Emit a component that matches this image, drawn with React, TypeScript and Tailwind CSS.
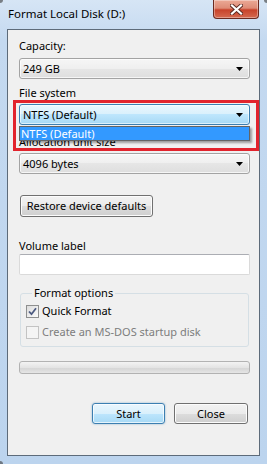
import React from "react";

const FONT = { fontFamily: '"Noto Sans", "Open Sans", sans-serif' };

function Arrow() {
  return (
    <svg width="7" height="4" viewBox="0 0 7 4" className="block">
      <path d="M0 0 H7 L3.5 4 Z" fill="#000" />
    </svg>
  );
}

function Combo({ value, hot }: { value: string; hot?: boolean }) {
  return (
    <div
      className={
        hot
          ? "flex h-[21px] items-center justify-between rounded-[3px] border border-[#3c7fb1] bg-[linear-gradient(#eaf6fd_0%,#d9f0fc_50%,#bee6fd_50%,#a7d9f5_100%)] pl-[3px] pr-[6px] shadow-[inset_0_0_0_1px_rgba(255,255,255,0.6)]"
          : "flex h-[21px] items-center justify-between rounded-[3px] border border-[#a3a3a3] bg-[linear-gradient(#f6f6f6_0%,#efefef_50%,#e6e6e6_50%,#dedede_100%)] pl-[3px] pr-[6px] shadow-[inset_0_0_0_1px_rgba(255,255,255,0.7)]"
      }
    >
      <span className="leading-[16px]">{value}</span>
      <Arrow />
    </div>
  );
}

function Label({ children, className = "" }: { children: React.ReactNode; className?: string }) {
  return <div className={"h-[16px] leading-[16px] " + className}>{children}</div>;
}

function CheckRow({ checked, disabled, label }: { checked?: boolean; disabled?: boolean; label: string }) {
  return (
    <div className="flex h-[16px] items-center gap-[3px]">
      <div
        className={
          disabled
            ? "flex h-[13px] w-[13px] items-center justify-center border border-[#c3c3c3] bg-[#f4f4f4]"
            : "flex h-[13px] w-[13px] items-center justify-center border border-[#8e8f8f] bg-[linear-gradient(135deg,#dcdcdc,#fbfbfb)]"
        }
      >
        {checked && (
          <svg width="9" height="9" viewBox="0 0 9 9" className="block">
            <path d="M1 4.5 L3.5 7.2 L8 1.2" fill="none" stroke="#4c5a80" strokeWidth="1.8" />
          </svg>
        )}
      </div>
      <span className={disabled ? "leading-[16px] text-[#7d7d7d]" : "leading-[16px]"}>{label}</span>
    </div>
  );
}

export default function App() {
  return (
    <div
      style={FONT}
      className="relative h-[464px] w-[267px] overflow-hidden bg-[linear-gradient(180deg,#d6e5f5_0px,#c4d9f0_40px,#bcd4ee_100%)] text-[11px] text-black"
    >
      {/* title bar */}
      <div className="flex h-[29px] items-start">
        <div className="pl-[8px] pt-[6px] text-[11.5px] leading-[16px] text-black">Format Local Disk (D:)</div>
        <div className="ml-auto mr-[8px] flex h-[19px] w-[46px] items-center justify-center rounded-b-[4px] border border-t-0 border-[#6b2a20] bg-[linear-gradient(#eba996_0%,#de8c77_45%,#c8432b_55%,#d56a50_100%)] shadow-[inset_0_0_0_1px_rgba(255,255,255,0.35)]">
          <svg width="13" height="11" viewBox="0 0 13 11" className="block">
            <path d="M2 1.5 L11 9.5 M11 1.5 L2 9.5" stroke="#5a2a22" strokeWidth="4" strokeLinecap="square" />
            <path d="M2 1.5 L11 9.5 M11 1.5 L2 9.5" stroke="#ffffff" strokeWidth="2.2" strokeLinecap="square" />
          </svg>
        </div>
      </div>

      {/* client area */}
      <div className="ml-[7px] h-[427px] w-[253px] border border-[#5d6b7a] bg-[#f0f0f0] pl-[11px] pr-[9px]">
        <Label className="mt-[8px]">Capacity:</Label>
        <div className="mt-[4px]">
          <Combo value="249 GB" />
        </div>

        <Label className="mt-[6px]">File system</Label>
        <div className="relative mt-[3px]">
          <Combo value="NTFS (Default)" hot />
          {/* open dropdown list */}
          <div className="absolute left-0 right-0 top-[22px] z-10 border border-[#646464] bg-white shadow-[2px_2px_2px_rgba(0,0,0,0.35)]">
            <div className="h-[13px] bg-[#3399ff] pl-[1px] leading-[13px] text-white">NTFS (Default)</div>
          </div>
        </div>

        <Label className="mt-[9px]">Allocation unit size</Label>
        <div className="mt-[3px]">
          <Combo value="4096 bytes" />
        </div>

        <button className="ml-[1px] mt-[21px] flex h-[22px] w-[133px] items-center justify-center rounded-[3px] border border-[#707070] bg-[linear-gradient(#f2f2f2_0%,#ebebeb_50%,#dddddd_50%,#cfcfcf_100%)] leading-[16px] shadow-[inset_0_0_0_1px_#fcfcfc]">
          Restore device defaults
        </button>

        <Label className="mt-[21px]">Volume label</Label>
        <div className="h-[21px] rounded-[2px] border border-[#dadada] border-t-[#abadb3] bg-white" />

        <fieldset className="ml-[1px] mt-[10px] w-[229px] rounded-[3px] border border-[#d5dfe5] pb-[6px] pl-[5px]">
          <legend className="ml-[6px] px-[2px] leading-[16px]">Format options</legend>
          <div className="mt-[2px] flex flex-col gap-[5px]">
            <CheckRow checked label="Quick Format" />
            <CheckRow disabled label="Create an MS-DOS startup disk" />
          </div>
        </fieldset>

        <div className="mt-[14px] h-[13px] rounded-[3px] border border-[#b2b2b2] bg-[linear-gradient(#f3f3f3_0%,#e4e4e4_50%,#d6d6d6_60%,#e6e6e6_100%)]" />

        <div className="mt-[29px] flex justify-end gap-[9px] pr-[2px]">
          <button className="flex h-[21px] w-[73px] items-center justify-center rounded-[3px] border border-[#3c7fb1] bg-[linear-gradient(#eaf6fd_0%,#d9f0fc_50%,#bee6fd_50%,#a7d9f5_100%)] leading-[16px] shadow-[inset_0_0_0_1px_rgba(255,255,255,0.7),0_0_2px_rgba(60,127,177,0.6)]">
            Start
          </button>
          <button className="flex h-[21px] w-[74px] items-center justify-center rounded-[3px] border border-[#707070] bg-[linear-gradient(#f2f2f2_0%,#ebebeb_50%,#dddddd_50%,#cfcfcf_100%)] leading-[16px] shadow-[inset_0_0_0_1px_#fcfcfc]">
            Close
          </button>
        </div>
      </div>

      {/* red highlight annotation */}
      <div className="pointer-events-none absolute left-[13px] top-[100px] z-20 h-[51px] w-[246px] border-[3px] border-[#e2232c]" />

      {/* window corner shading */}
      <div className="absolute left-0 top-0 h-[3px] w-[3px] rounded-br-[3px] bg-[#3a3a3a] opacity-60" />
      <div className="absolute right-0 top-0 h-[3px] w-[3px] rounded-bl-[3px] bg-[#3a3a3a] opacity-60" />
      <div className="absolute bottom-0 left-0 h-[3px] w-[3px] rounded-tr-[3px] bg-[#3a3a3a] opacity-60" />
    </div>
  );
}
